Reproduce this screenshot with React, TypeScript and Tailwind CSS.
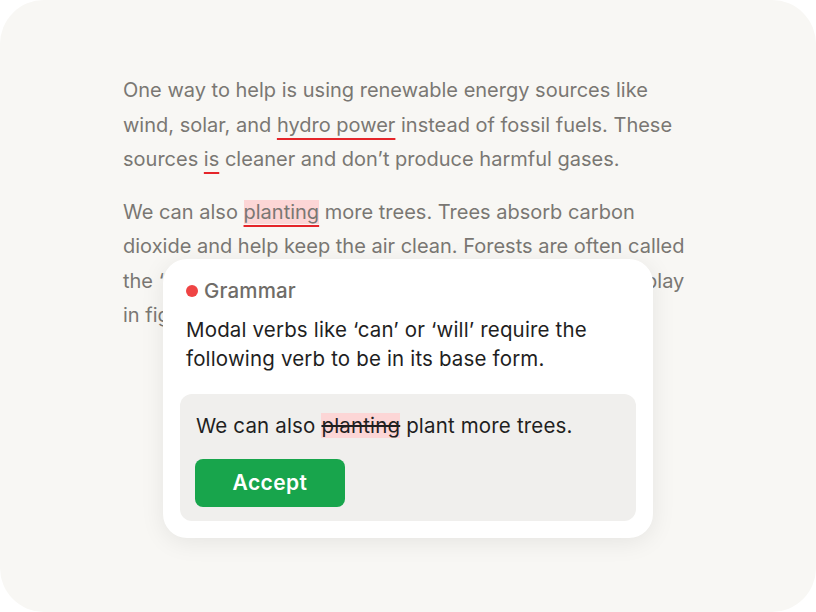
export default function App() {
  return (
    <div className="h-[612px] w-[816px] bg-white" style={{ fontFamily: "Inter, 'Noto Sans', sans-serif" }}>
      <div className="relative h-full w-full overflow-hidden rounded-[44px] bg-[#f8f7f4]">
        {/* === Document text === */}
        <div className="pl-[123px] pt-[73px] text-[20px] leading-[34.5px] text-[#7a7773]">
          <p>
            One way to help is using renewable energy sources like
            <br />
            wind, solar, and{" "}
            <span className="underline decoration-[#e5252a] decoration-2 underline-offset-[6px]">hydro power</span>{" "}
            instead of fossil fuels. These
            <br />
            sources{" "}
            <span className="underline decoration-[#e5252a] decoration-2 underline-offset-[6px]">is</span>{" "}
            cleaner and don’t produce harmful gases.
          </p>
          <p className="mt-[18px]">
            We can also{" "}
            <span className="bg-[#fcd6d6] underline decoration-[#e5252a] decoration-2 underline-offset-[6px]">planting</span>{" "}
            more trees. Trees absorb carbon
            <br />
            dioxide and help keep the air clean. Forests are often called
            <br />
            the ‘lungs of the Earth’ because of the crucial role they play
            <br />
            in fighting climate change.
          </p>
        </div>

        {/* === Suggestion popup === */}
        <div className="absolute left-[163px] top-[259px] w-[490px] rounded-[24px] bg-white p-[17px] tracking-[0.01em] shadow-[0_4px_24px_rgba(0,0,0,0.08)]">
          <div className="flex items-center gap-[6px] px-[6px] pt-[3px] text-[20.5px] font-medium leading-[24px] text-[#6f6c68]">
            <span className="h-[12px] w-[12px] rounded-full bg-[#ef4444]"></span>
            Grammar
          </div>
          <p className="mt-[12px] px-[6px] text-[20.5px] leading-[29px] text-[#1f1f1f]">
            Modal verbs like ‘can’ or ‘will’ require the
            <br />
            following verb to be in its base form.
          </p>
          <div className="mt-[21px] rounded-[12px] bg-[#f0efed] px-[15px] pb-[14px] pt-[17px]">
            <p className="pl-[1px] text-[20.5px] leading-[29px] text-[#1f1f1f]">
              We can also <span className="bg-[#fcd6d6] line-through">planting</span> plant more trees.
            </p>
            <button className="mt-[19px] h-[48px] w-[150px] rounded-[8px] bg-[#18a54c] text-[21px] font-semibold tracking-[0.02em] text-white">
              Accept
            </button>
          </div>
        </div>
      </div>
    </div>
  );
}
